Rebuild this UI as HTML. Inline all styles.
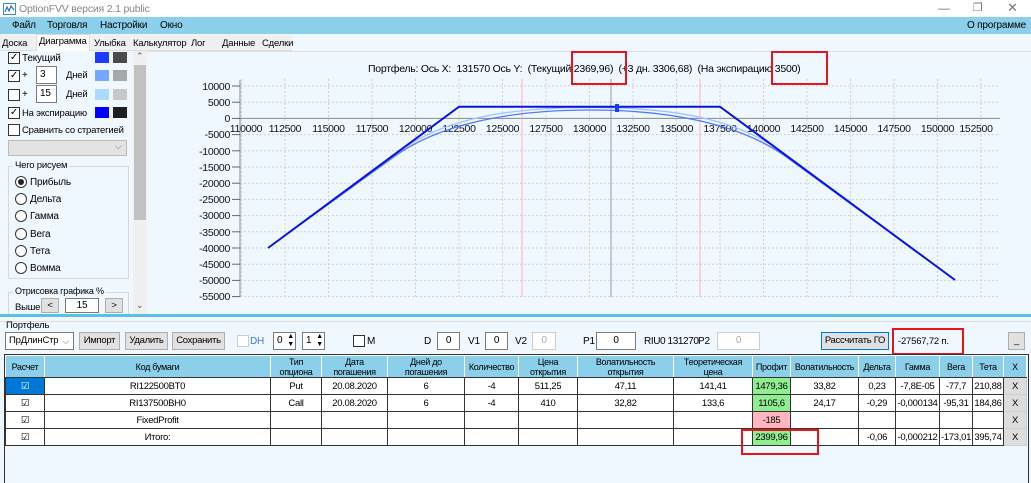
<!DOCTYPE html>
<html><head><meta charset="utf-8"><style>
*{box-sizing:border-box}
body{margin:0;width:1031px;height:483px;overflow:hidden;background:#f0f8ff;font-family:"Liberation Sans","DejaVu Sans",sans-serif;font-size:10px;color:#000;position:relative;letter-spacing:-0.2px}
.a{position:absolute;white-space:nowrap}
.cb{position:absolute;width:12px;height:12px;border:1px solid #333;background:#fff;font-size:10px;line-height:10px;text-align:center}
.sw{position:absolute;width:14px;height:11px}
.inp{position:absolute;background:#fff;border:1px solid #7a7a7a;height:18px;font-size:10px;line-height:16px;padding-left:3px}
.btn{position:absolute;background:#e1e1e1;border:1px solid #adadad;height:18px;font-size:9.5px;line-height:16px;text-align:center;letter-spacing:-0.3px}
.rad{position:absolute;width:12px;height:12px;border:1px solid #333;border-radius:50%;background:#fff}
.red{position:absolute;border:2px solid #e8141b}
table{border-collapse:collapse;table-layout:fixed;font-size:9.5px;letter-spacing:-0.3px}
td,th{border:1px solid #333;text-align:center;padding:0;overflow:hidden;white-space:nowrap}
th{background:#8ccfea;font-weight:normal;height:22px;line-height:10px;font-size:9px;border-color:#fff #fff #333 #fff;border-right:1px solid #fff}
td{height:17px;background:#fff}
.x{background:#ddd;border-color:#ccc}
</style></head><body>
<div class="a" style="left:0;top:0;width:1031px;height:18px;background:#fff"></div>
<svg class="a" style="left:3px;top:3px" width="13" height="12"><rect x="0.5" y="0.5" width="12" height="11" fill="#fff" stroke="#3a8fd8"/><polyline points="2,9 4,4 6,8 8,3 11,7" fill="none" stroke="#2a6fd0" stroke-width="1.2"/></svg>
<div class="a" style="left:19px;top:3px;color:#888;font-size:10.5px">OptionFVV версия 2.1 public</div>
<div class="a" style="left:938px;top:1px;color:#777;font-size:12px">—</div>
<div class="a" style="left:973px;top:1px;color:#777;font-size:11px">❐</div>
<div class="a" style="left:1007px;top:0px;color:#777;font-size:13px">✕</div>
<div class="a" style="left:0;top:17px;width:1031px;height:17px;background:#8ccfea"></div>
<div class="a" style="left:12px;top:20px">Файл</div>
<div class="a" style="left:47px;top:20px">Торговля</div>
<div class="a" style="left:100px;top:20px">Настройки</div>
<div class="a" style="left:160px;top:20px">Окно</div>
<div class="a" style="left:967px;top:20px">О программе</div>
<div class="a" style="left:0;top:35px;width:292px;height:16px;background:#f0f0f0;border-bottom:1px solid #ddd"></div>
<div class="a" style="left:2px;top:38px;font-size:9.5px">Доска</div>
<div class="a" style="left:36px;top:34px;width:54px;height:17px;background:#fff;border:1px solid #ddd;border-bottom:none"></div>
<div class="a" style="left:39px;top:36px;font-size:9.5px">Диаграмма</div>
<div class="a" style="left:94px;top:38px;font-size:9.5px">Улыбка</div>
<div class="a" style="left:133px;top:38px;font-size:9.5px">Калькулятор</div>
<div class="a" style="left:191px;top:38px;font-size:9.5px">Лог</div>
<div class="a" style="left:222px;top:38px;font-size:9.5px">Данные</div>
<div class="a" style="left:262px;top:38px;font-size:9.5px">Сделки</div>
<div class="a" style="left:0;top:51px;width:133px;height:263px;background:#f0f8ff"></div>
<div class="cb" style="left:8px;top:52px">✓</div><div class="a" style="left:22px;top:53px">Текущий</div>
<div class="sw" style="left:95px;top:52px;background:#1a3cff"></div><div class="sw" style="left:113px;top:52px;background:#4a4a4a"></div>
<div class="cb" style="left:8px;top:70px">✓</div><div class="a" style="left:22px;top:70px">+</div>
<div class="inp" style="left:36px;top:66px;width:21px">3</div><div class="a" style="left:66px;top:70px;font-size:9.5px">Дней</div>
<div class="sw" style="left:95px;top:70px;background:#77a8ff"></div><div class="sw" style="left:113px;top:70px;background:#a8a8a8"></div>
<div class="cb" style="left:8px;top:89px"></div><div class="a" style="left:22px;top:89px">+</div>
<div class="inp" style="left:36px;top:85px;width:21px">15</div><div class="a" style="left:66px;top:89px;font-size:9.5px">Дней</div>
<div class="sw" style="left:95px;top:89px;background:#abd9ff"></div><div class="sw" style="left:113px;top:89px;background:#c8c8c8"></div>
<div class="cb" style="left:8px;top:107px">✓</div><div class="a" style="left:22px;top:108px;font-size:9.5px">На экспирацию</div>
<div class="sw" style="left:95px;top:107px;background:#0000ff"></div><div class="sw" style="left:113px;top:107px;background:#1e1e1e"></div>
<div class="cb" style="left:8px;top:124px"></div><div class="a" style="left:22px;top:125px;font-size:9.5px">Сравнить со стратегией</div>
<div class="a" style="left:8px;top:140px;width:119px;height:16px;background:#e3e3e3;border:1px solid #bbb"></div>
<div class="a" style="left:115px;top:141px;color:#777;font-size:9px">⌵</div>
<div class="a" style="left:8px;top:166px;width:121px;height:113px;border:1px solid #d8d8d8"></div>
<div class="a" style="left:13px;top:160px;background:#f0f8ff;padding:0 2px;font-size:9.5px">Чего рисуем</div>
<div class="rad" style="left:15px;top:176px"><div style="width:6px;height:6px;border-radius:50%;background:#222;margin:2px"></div></div><div class="a" style="left:30px;top:177px">Прибыль</div>
<div class="rad" style="left:15px;top:193px"></div><div class="a" style="left:30px;top:194px">Дельта</div>
<div class="rad" style="left:15px;top:210px"></div><div class="a" style="left:30px;top:211px">Гамма</div>
<div class="rad" style="left:15px;top:228px"></div><div class="a" style="left:30px;top:229px">Вега</div>
<div class="rad" style="left:15px;top:245px"></div><div class="a" style="left:30px;top:246px">Тета</div>
<div class="rad" style="left:15px;top:262px"></div><div class="a" style="left:30px;top:263px">Вомма</div>
<div class="a" style="left:8px;top:292px;width:121px;height:30px;border:1px solid #d8d8d8"></div>
<div class="a" style="left:13px;top:286px;background:#f0f8ff;padding:0 2px;font-size:9px">Отрисовка графика %</div>
<div class="a" style="left:15px;top:302px;font-size:9.5px">Выше</div>
<div class="btn" style="left:41px;top:298px;width:18px;height:15px;line-height:13px">&lt;</div>
<div class="inp" style="left:65px;top:298px;width:34px;height:15px;line-height:13px;text-align:center;padding:0">15</div>
<div class="btn" style="left:105px;top:298px;width:18px;height:15px;line-height:13px">&gt;</div>
<div class="a" style="left:133px;top:51px;width:14px;height:263px;background:#f0f0f0"></div>
<div class="a" style="left:134px;top:65px;width:12px;height:155px;background:#c2c2c2"></div>
<div class="a" style="left:136px;top:51px;font-size:9px;color:#555">⌃</div>
<div class="a" style="left:136px;top:300px;font-size:9px;color:#555">⌄</div>
<div class="a" style="left:147px;top:51px;width:884px;height:264px;background:#f0f8ff;border-top:1px solid #e0e0e0"></div>
<div class="a" style="left:368px;top:63px;font-size:10.5px;letter-spacing:-0.25px">Портфель: Ось X: &nbsp;131570 Ось Y: &nbsp;(Текущий 2369,96) &nbsp;(+3 дн. 3306,68) &nbsp;(На экспирацию 3500)</div>
<svg class="a" style="left:0;top:0;letter-spacing:-0.3px" width="1031" height="320" font-family="Liberation Sans,sans-serif" font-size="10.5">
<rect x="240" y="79" width="762" height="219" fill="#f0f8ff"/>
<g stroke="#cfcfcf" stroke-dasharray="2,2" fill="none">
<line x1="241.5" y1="79" x2="241.5" y2="297"/><line x1="285" y1="79" x2="285" y2="297"/><line x1="328.5" y1="79" x2="328.5" y2="297"/><line x1="372" y1="79" x2="372" y2="297"/><line x1="415.5" y1="79" x2="415.5" y2="297"/><line x1="459" y1="79" x2="459" y2="297"/><line x1="502.5" y1="79" x2="502.5" y2="297"/><line x1="546" y1="79" x2="546" y2="297"/><line x1="589.5" y1="79" x2="589.5" y2="297"/><line x1="633" y1="79" x2="633" y2="297"/><line x1="676.5" y1="79" x2="676.5" y2="297"/><line x1="720" y1="79" x2="720" y2="297"/><line x1="763.5" y1="79" x2="763.5" y2="297"/><line x1="807" y1="79" x2="807" y2="297"/><line x1="850.5" y1="79" x2="850.5" y2="297"/><line x1="894" y1="79" x2="894" y2="297"/><line x1="937.5" y1="79" x2="937.5" y2="297"/><line x1="981" y1="79" x2="981" y2="297"/>
<line x1="240" y1="86" x2="1000" y2="86"/><line x1="240" y1="102.2" x2="1000" y2="102.2"/><line x1="240" y1="134.6" x2="1000" y2="134.6"/><line x1="240" y1="150.8" x2="1000" y2="150.8"/><line x1="240" y1="167" x2="1000" y2="167"/><line x1="240" y1="183.2" x2="1000" y2="183.2"/><line x1="240" y1="199.4" x2="1000" y2="199.4"/><line x1="240" y1="215.6" x2="1000" y2="215.6"/><line x1="240" y1="231.8" x2="1000" y2="231.8"/><line x1="240" y1="248" x2="1000" y2="248"/><line x1="240" y1="264.2" x2="1000" y2="264.2"/><line x1="240" y1="280.4" x2="1000" y2="280.4"/><line x1="240" y1="296.6" x2="1000" y2="296.6"/>
</g>
<line x1="240" y1="118.4" x2="1000" y2="118.4" stroke="#888"/>
<line x1="240" y1="80" x2="240" y2="297" stroke="#888"/>
<line x1="522" y1="79" x2="522" y2="297" stroke="#ffb0b0"/>
<line x1="700" y1="79" x2="700" y2="297" stroke="#ffb0b0"/>
<line x1="611" y1="79" x2="611" y2="297" stroke="#9a9aa8"/>
<g stroke="#666"><line x1="232" y1="86" x2="240" y2="86"/><line x1="232" y1="102.2" x2="240" y2="102.2"/><line x1="232" y1="118.4" x2="240" y2="118.4"/><line x1="232" y1="134.6" x2="240" y2="134.6"/><line x1="232" y1="150.8" x2="240" y2="150.8"/><line x1="232" y1="167" x2="240" y2="167"/><line x1="232" y1="183.2" x2="240" y2="183.2"/><line x1="232" y1="199.4" x2="240" y2="199.4"/><line x1="232" y1="215.6" x2="240" y2="215.6"/><line x1="232" y1="231.8" x2="240" y2="231.8"/><line x1="232" y1="248" x2="240" y2="248"/><line x1="232" y1="264.2" x2="240" y2="264.2"/><line x1="232" y1="280.4" x2="240" y2="280.4"/><line x1="232" y1="296.6" x2="240" y2="296.6"/></g>
<g text-anchor="end" fill="#111">
<text x="230" y="90">10000</text><text x="230" y="106">5000</text><text x="230" y="122">0</text><text x="230" y="138">-5000</text><text x="230" y="155">-10000</text><text x="230" y="171">-15000</text><text x="230" y="187">-20000</text><text x="230" y="203">-25000</text><text x="230" y="219">-30000</text><text x="230" y="236">-35000</text><text x="230" y="252">-40000</text><text x="230" y="268">-45000</text><text x="230" y="284">-50000</text><text x="230" y="300">-55000</text>
</g>
<g text-anchor="middle" fill="#111">
<text x="246" y="132">110000</text><text x="285" y="132">112500</text><text x="328.5" y="132">115000</text><text x="372" y="132">117500</text><text x="415.5" y="132">120000</text><text x="459" y="132">122500</text><text x="502.5" y="132">125000</text><text x="546" y="132">127500</text><text x="589.5" y="132">130000</text><text x="633" y="132">132500</text><text x="676.5" y="132">135000</text><text x="720" y="132">137500</text><text x="763.5" y="132">140000</text><text x="807" y="132">142500</text><text x="850.5" y="132">145000</text><text x="894" y="132">147500</text><text x="937.5" y="132">150000</text><text x="976" y="132">152500</text>
</g>
<path d="M268,248 L400,151 C445,118 510,107.5 590,107.5 C670,107.5 735,118 780,151 L955,280" fill="none" stroke="#9cc4ff" stroke-width="1.3"/>
<path d="M268,248 L395,156 C440,124 510,110 590,110 C670,110 740,124 785,156 L955,280" fill="none" stroke="#5577ff" stroke-width="1.3"/>
<polyline points="268,248 459,106.7 720,106.7 955,280" fill="none" stroke="#0a14e0" stroke-width="2"/>
<rect x="615" y="104" width="4" height="8" fill="#1a3cff"/>
</svg>
<div class="red" style="left:571px;top:51px;width:56px;height:34px"></div>
<div class="red" style="left:771px;top:51px;width:57px;height:34px"></div>
<div class="a" style="left:0;top:314px;width:1031px;height:3px;background:#5bc0e8"></div>
<div class="a" style="left:0;top:317px;width:1031px;height:166px;background:#f0f8ff"></div>
<div class="a" style="left:0;top:321px;width:1031px;height:1px;background:#ddd"></div>
<div class="a" style="left:6px;top:320px;font-size:9.5px">Портфель</div>
<div class="inp" style="left:5px;top:332px;width:69px;font-size:9.5px">ПрДлинСтр<span style="position:absolute;right:4px;color:#666;font-size:9px">⌵</span></div>
<div class="btn" style="left:79px;top:332px;width:41px">Импорт</div>
<div class="btn" style="left:125px;top:332px;width:43px">Удалить</div>
<div class="btn" style="left:172px;top:332px;width:53px">Сохранить</div>
<div class="cb" style="left:237px;top:335px;border-color:#ccc"></div>
<div class="a" style="left:250px;top:336px;color:#3a7dd8">DH</div>
<div class="inp" style="left:273px;top:332px;width:23px">0<span style="position:absolute;right:1px;top:0;font-size:7px;line-height:8px">▲<br>▼</span></div>
<div class="inp" style="left:302px;top:332px;width:23px">1<span style="position:absolute;right:1px;top:0;font-size:7px;line-height:8px">▲<br>▼</span></div>
<div class="cb" style="left:353px;top:335px"></div>
<div class="a" style="left:367px;top:336px">M</div>
<div class="a" style="left:424px;top:336px">D</div><div class="inp" style="left:437px;top:332px;width:23px;text-align:center;padding:0">0</div>
<div class="a" style="left:468px;top:336px">V1</div><div class="inp" style="left:485px;top:332px;width:23px;text-align:center;padding:0">0</div>
<div class="a" style="left:515px;top:336px">V2</div><div class="inp" style="left:532px;top:332px;width:24px;text-align:center;padding:0;color:#aaa;border-color:#ccc">0</div>
<div class="a" style="left:583px;top:336px">P1</div><div class="inp" style="left:596px;top:332px;width:40px;text-align:center;padding:0">0</div>
<div class="a" style="left:644px;top:336px;letter-spacing:-0.4px">RIU0 131270</div>
<div class="a" style="left:698px;top:336px">P2</div><div class="inp" style="left:717px;top:332px;width:43px;text-align:center;padding:0;color:#aaa;border-color:#ccc">0</div>
<div class="btn" style="left:821px;top:332px;width:68px;border:1px solid #0078d7;font-size:9.5px">Рассчитать ГО</div>
<div class="a" style="left:898px;top:336px;font-size:9.5px">-27567,72 п.</div>
<div class="red" style="left:892px;top:328px;width:72px;height:27px"></div>
<div class="btn" style="left:1008px;top:332px;width:17px">_</div>
<div class="a" style="left:4px;top:354px;width:1025px;height:129px;border:1px solid #333;border-bottom:none;background:#f0f8ff;overflow:hidden">
<table style="width:1021px">
<colgroup><col style="width:39px"><col style="width:226px"><col style="width:51px"><col style="width:66px"><col style="width:77px"><col style="width:54px"><col style="width:59px"><col style="width:96px"><col style="width:79px"><col style="width:38px"><col style="width:68px"><col style="width:37px"><col style="width:44px"><col style="width:33px"><col style="width:31px"><col style="width:23px"></colgroup>
<tr><th>Расчет</th><th>Код бумаги</th><th>Тип<br>опциона</th><th>Дата<br>погашения</th><th>Дней до<br>погашения</th><th>Количество</th><th>Цена<br>открытия</th><th>Волатильность<br>открытия</th><th>Теоретическая<br>цена</th><th>Профит</th><th>Волатильность</th><th>Дельта</th><th>Гамма</th><th>Вега</th><th>Тета</th><th>X</th></tr>
<tr><td style="background:#0078d7;color:#fff">☑</td><td>RI122500BT0</td><td>Put</td><td>20.08.2020</td><td>6</td><td>-4</td><td>511,25</td><td>47,11</td><td>141,41</td><td style="background:#90ee90">1479,36</td><td>33,82</td><td>0,23</td><td>-7,8E-05</td><td>-77,7</td><td>210,88</td><td class="x">X</td></tr>
<tr><td>☑</td><td>RI137500BH0</td><td>Call</td><td>20.08.2020</td><td>6</td><td>-4</td><td>410</td><td>32,82</td><td>133,6</td><td style="background:#90ee90">1105,6</td><td>24,17</td><td>-0,29</td><td>-0,000134</td><td>-95,31</td><td>184,86</td><td class="x">X</td></tr>
<tr><td>☑</td><td>FixedProfit</td><td></td><td></td><td></td><td></td><td></td><td></td><td></td><td style="background:#ffb6c1">-185</td><td></td><td></td><td></td><td></td><td></td><td class="x">X</td></tr>
<tr><td>☑</td><td>Итого:</td><td></td><td></td><td></td><td></td><td></td><td></td><td></td><td style="background:#90ee90">2399,96</td><td></td><td>-0,06</td><td>-0,000212</td><td>-173,01</td><td>395,74</td><td class="x">X</td></tr>
</table></div>
<div class="red" style="left:741px;top:429px;width:78px;height:26px"></div>
</body></html>
